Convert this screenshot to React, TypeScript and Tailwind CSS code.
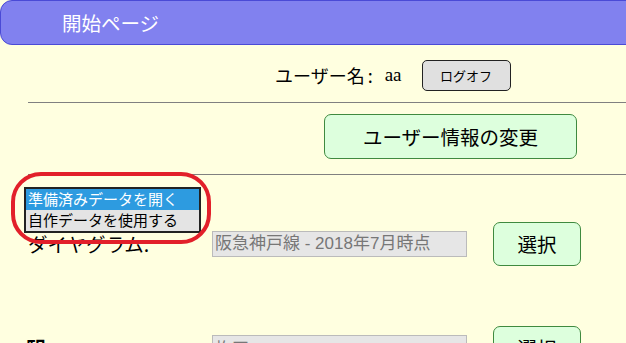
export default function App() {
  const jp = "font-['Noto_Sans_CJK_JP',sans-serif]";
  return (
    <div className={`relative h-[343px] overflow-hidden bg-[#ffffe0] text-black ${jp}`}>
      {/* header */}
      <div className="-mr-4 flex h-[45px] items-center rounded-l-[12px] border border-[#4a4ad6] bg-[#8181ef] pl-[61px] text-[19.5px] text-white">
        開始ページ
      </div>

      {/* user name + logoff */}
      <div className="mt-[15px] flex h-[31px] items-center pl-[275px] text-[18px]">
        <span>ユーザー名</span>
        <span className="ml-[3px]">:</span>
        <span className="ml-[12px] font-['Liberation_Serif',serif] text-[19px]">aa</span>
        <button className="ml-[20px] h-[31px] w-[89px] rounded-[5px] border border-[#222] bg-[#e0e0e0] text-[13px]">
          ログオフ
        </button>
      </div>

      <div className="ml-[28px] mt-[11px] border-t border-[#808080]" />

      <div className="mt-[11px] pl-[324px]">
        <button className="h-[45px] w-[253px] rounded-[7px] border border-[#3f8a3f] bg-[#ddffdd] text-[19.5px]">
          ユーザー情報の変更
        </button>
      </div>

      <div className="ml-[28px] mt-[15px] border-t border-[#808080]" />

      {/* diagram row */}
      <div className="mt-[47px] flex h-[44px] items-center">
        <span className="w-[212px] pl-[28px] text-[19.5px]">ダイヤグラム:</span>
        <div className="flex h-[26px] w-[255px] items-center border border-[#bbbbbb] bg-[#e6e6e6] px-[2px] font-['Liberation_Sans','Noto_Sans_CJK_JP',sans-serif] text-[17px] text-[#777777]">
          阪急神戸線 - 2018年7月時点
        </div>
        <button className="ml-[26px] h-[44px] w-[88px] rounded-[7px] border border-[#3f8a3f] bg-[#ddffdd] text-[19.5px]">
          選択
        </button>
      </div>

      {/* station row */}
      <div className="mt-[60px] flex h-[44px] items-center">
        <span className="w-[212px] pl-[26px] text-[19.5px] font-bold">駅:</span>
        <div className="flex h-[26px] w-[255px] items-center border border-[#bbbbbb] bg-[#e6e6e6] px-[2px] text-[17px] text-[#777777]">
          梅田
        </div>
        <button className="ml-[26px] h-[44px] w-[88px] rounded-[7px] border border-[#3f8a3f] bg-[#ddffdd] text-[19.5px]">
          選択
        </button>
      </div>

      {/* open select list */}
      <div className="absolute left-[24px] top-[187px] w-[177px] border-2 border-[#222] bg-[#e4e4e4] text-[15px] leading-[20px]">
        <div className="h-[21px] bg-[#2d9be0] px-[2px] text-white">準備済みデータを開く</div>
        <div className="h-[21px] px-[2px]">自作データを使用する</div>
      </div>

      {/* red annotation */}
      <div className="absolute left-[11px] top-[172px] h-[72px] w-[200px] rounded-[30px] border-[4px] border-[#e2202a]" />
    </div>
  );
}
